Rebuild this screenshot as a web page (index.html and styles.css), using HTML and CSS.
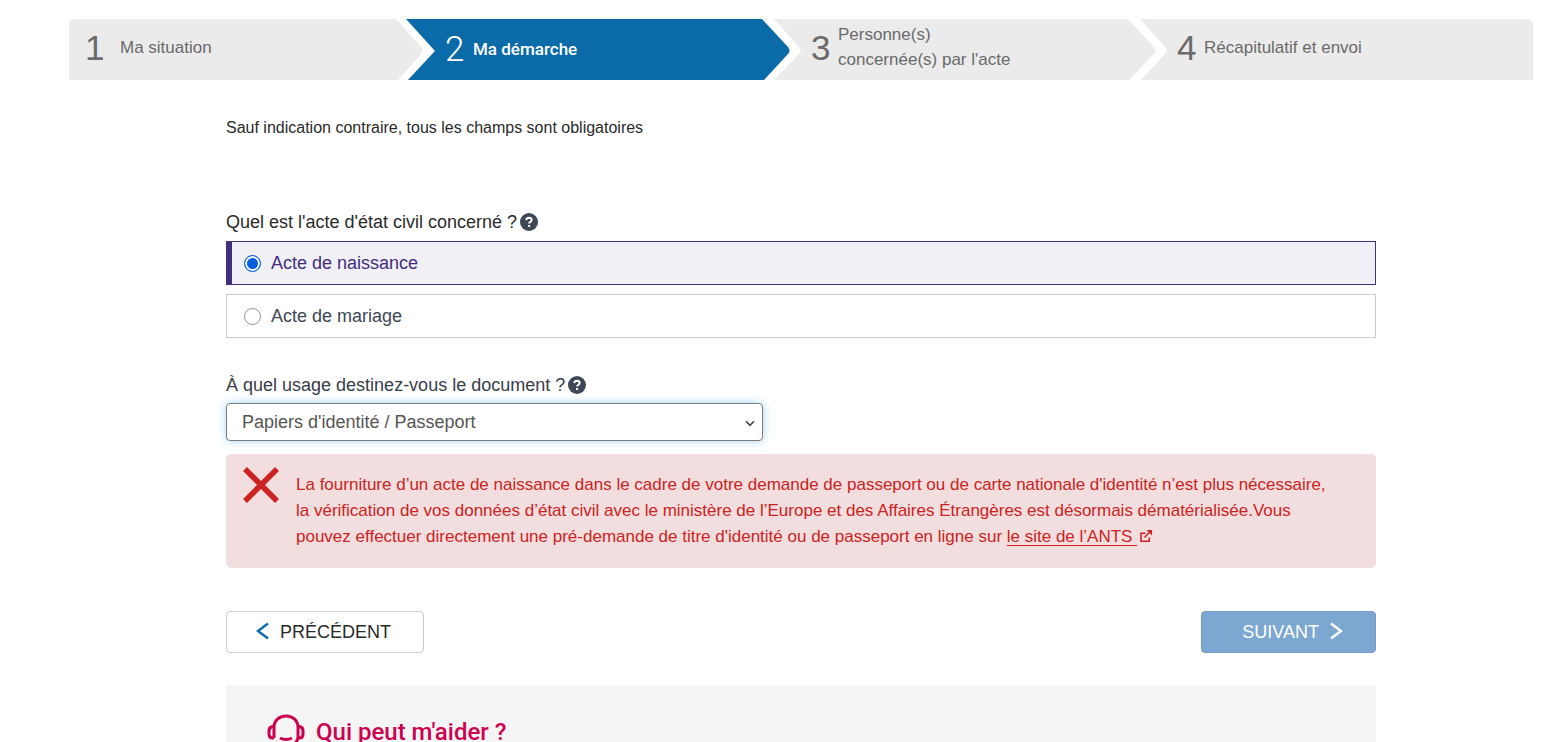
FILE: index.html
```
<!DOCTYPE html>
<html lang="fr">
<head>
<meta charset="utf-8">
<title>Demande d'acte d'état civil</title>
<link rel="stylesheet" href="styles.css">
</head>
<body>
<div class="page">
  <ol class="steps">
    <li class="step">
      <span class="step-num">1</span>
      <span class="step-label step-label-first">Ma situation</span>
      <svg class="step-arrow" viewBox="0 0 40 61" aria-hidden="true">
        <path class="fill-white" d="M0 0H12L40 32L12 61H0z"/>
        <path class="fill-blue" d="M11 0H40V61H13L40 32z"/>
        <path class="fill-grey" d="M0 0Q1 0 3 2L26 28Q29 31 26 35L3 61H0z"/>
      </svg>
    </li>
    <li class="step step-current" aria-current="step">
      <span class="step-num">2</span>
      <span class="step-label">Ma démarche</span>
      <svg class="step-arrow" viewBox="0 0 40 61" aria-hidden="true">
        <path class="fill-white" d="M0 0H40V61H0z"/>
        <path class="fill-grey" d="M13 0H40V61H13L38 35Q41 32 38 28z"/>
        <path class="fill-blue" d="M0 0H1L27 28Q30 32 27 35L3 61H0z"/>
      </svg>
    </li>
    <li class="step">
      <span class="step-num">3</span>
      <span class="step-label">Personne(s)<br>concernée(s) par l'acte</span>
      <svg class="step-arrow" viewBox="0 0 40 61" aria-hidden="true">
        <path class="fill-grey" d="M0 0H40V61H0z"/>
        <path class="fill-white" d="M1 0H13L38 28Q41 32 38 35L14 61H2L27 35Q30 32 27 28z"/>
      </svg>
    </li>
    <li class="step">
      <span class="step-num">4</span>
      <span class="step-label">Récapitulatif et envoi</span>
    </li>
  </ol>

  <main class="content">
    <p class="notice">Sauf indication contraire, tous les champs sont obligatoires</p>
    <form>
      <fieldset class="group">
        <legend class="question question-dark">Quel est l'acte d'état civil concerné ?
          <button class="help-btn" type="button" aria-label="Aide sur l'acte">
            <svg viewBox="0 0 18 18" width="18" height="18" aria-hidden="true"><circle cx="9" cy="9" r="9"/><path d="M6.3 7.1Q6.6 4.8 9 4.8Q11.6 4.9 11.6 7Q11.6 8.1 10.3 8.9Q9.1 9.6 9.1 10.6M9.1 12V14"/></svg>
          </button>
        </legend>
        <label class="choice choice-selected"><input type="radio" name="acte" checked>Acte de naissance</label>
        <label class="choice"><input type="radio" name="acte">Acte de mariage</label>
      </fieldset>

      <div class="question">
        <label for="usage">À quel usage destinez-vous le document ?</label>
        <button class="help-btn" type="button" aria-label="Aide sur l'usage">
          <svg viewBox="0 0 18 18" width="18" height="18" aria-hidden="true"><circle cx="9" cy="9" r="9"/><path d="M6.3 7.1Q6.6 4.8 9 4.8Q11.6 4.9 11.6 7Q11.6 8.1 10.3 8.9Q9.1 9.6 9.1 10.6M9.1 12V14"/></svg>
        </button>
      </div>
      <div class="select-wrap">
        <select id="usage" class="select"><option>Papiers d'identité / Passeport</option></select>
        <svg class="select-chevron" viewBox="0 0 10 7" aria-hidden="true"><path d="M1 1.2L5 5.4L9 1.2"/></svg>
      </div>

      <div class="alert" role="alert">
        <svg class="alert-cross" viewBox="0 0 36 36" aria-hidden="true"><path d="M2 2L34 34M34 2L2 34"/></svg>
        <p class="alert-text">La fourniture d’un acte de naissance dans le cadre de votre demande de passeport ou de carte nationale d'identité n’est plus nécessaire,<br>la vérification de vos données d’état civil avec le ministère de l’Europe et des Affaires Étrangères est désormais dématérialisée.Vous<br>pouvez effectuer directement une pré-demande de titre d'identité ou de passeport en ligne sur <a class="alert-link" href="#">le site de l’ANTS&nbsp;<svg class="external" viewBox="0 0 12 12" aria-hidden="true"><path class="external-line" d="M5.5 3.2H1V11.2H9.3V7.5M4.5 7.5L9.5 2.3"/><path class="external-head" d="M6.5 0H12V5.5z"/></svg></a></p>
      </div>

      <div class="actions">
        <button class="btn btn-prev" type="button"><svg class="chevron" viewBox="0 0 13 18" aria-hidden="true"><path d="M12 1.5L2 9L12 16.5"/></svg>PRÉCÉDENT</button>
        <button class="btn btn-next" type="submit" disabled>SUIVANT<svg class="chevron" viewBox="0 0 13 18" aria-hidden="true"><path d="M1 1.5L11 9L1 16.5"/></svg></button>
      </div>
    </form>

    <section class="help">
      <svg class="headset" viewBox="0 0 38 38" aria-hidden="true"><path d="M7 24V13.5C7 6.500 12 2 19 2S31 6.500 31 13.500V24M7 12.500H5.500Q2 13 2 17V20Q2 24 5.500 24H7M31 12.500H32.500Q36 13 36 17V20Q36 24 32.500 24H31M13 24Q19 27 25 24M31 24Q29 31 23 33"/></svg>
      <h2 class="help-title">Qui peut m'aider ?</h2>
    </section>
  </main>
</div>
</body>
</html>
```
FILE: styles.css
```
* { box-sizing: border-box; }
body {
  margin: 0;
  background: #fff;
  color: #2a2a2a;
  font: 18px/26px "Liberation Sans", Arial, sans-serif;
}
.page { padding: 19px 29px 0 69px; }

.steps {
  display: grid;
  grid-template-columns: repeat(4, 1fr);
  margin: 0;
  padding: 0;
  list-style: none;
  background: #ebebeb;
  border-radius: 6px 6px 0 0;
  overflow: hidden;
}
.step {
  display: flex;
  align-items: center;
  height: 61px;
  padding-left: 10px;
  color: #6a6a6a;
  font-size: 17px;
  line-height: 25px;
}
.step:first-child { padding-left: 16px; }
.step-num {
  width: 27px;
  font-size: 35px;
  line-height: 57px;
  padding-bottom: 4px;
}
.step-label { padding-bottom: 5px; }
.step-label-first { padding-left: 8px; }
.step-arrow { flex: none; width: 40px; height: 61px; margin-left: auto; }
.step-current {
  background: #0a6ba8;
  color: #fff;
  font-family: Roboto, sans-serif;
  font-weight: 500;
}
.step-current .step-num { width: 28px; font-weight: 300; padding-bottom: 0; }
.step-current .step-label { padding-bottom: 1px; }
.fill-grey { fill: #ebebeb; }
.fill-blue { fill: #0a6ba8; }
.fill-white { fill: #fff; }

.content { max-width: 1150px; margin: 0 auto; padding-top: 35px; }
.notice { margin: 0 0 68px; font-size: 16px; }
.group { margin: 0 0 34px; padding: 0; border: 0; min-width: 0; }
.question {
  display: flex;
  align-items: center;
  gap: 3px;
  padding: 0;
  color: #373d49;
}
.question-dark { color: #2a2a2a; margin-bottom: 6px; }
.help-btn {
  display: flex;
  padding: 0;
  border: 0;
  background: none;
}
.help-btn circle { fill: #3e4756; }
.help-btn path { fill: none; stroke: #fff; stroke-width: 2; }

.choice {
  display: flex;
  align-items: center;
  height: 44px;
  padding-left: 17px;
  border: 1px solid #ccc;
  color: #3e4756;
}
.choice + .choice { margin-top: 9px; }
.choice-selected {
  padding-left: 12px;
  border-color: #422e7c;
  border-left-width: 6px;
  background: #f1f0f7;
  color: #422e7c;
}
.choice input {
  appearance: none;
  width: 17px;
  height: 17px;
  margin: 0 10px 0 0;
  border: 1px solid #8f8f9d;
  border-radius: 50%;
  background: #fff;
}
.choice input:checked {
  border-color: #0060df;
  background: #0060df;
  box-shadow: inset 0 0 0 2px #fff;
}

.select-wrap { display: grid; align-items: center; width: 537px; max-width: 100%; margin-top: 5px; }
.select {
  grid-area: 1 / 1;
  appearance: none;
  width: 100%;
  height: 38px;
  padding: 0 30px 0 15px;
  border: 1px solid #7b7b7b;
  border-radius: 4px;
  background: #fff;
  box-shadow: 0 0 10px #a6d4f7;
  color: #555;
  font: inherit;
}
.select-chevron {
  grid-area: 1 / 1;
  justify-self: end;
  width: 10px;
  height: 7px;
  margin-right: 8px;
  margin-top: 2px;
  pointer-events: none;
}
.select-chevron path { fill: none; stroke: #444; stroke-width: 1.6; }

.alert {
  display: flex;
  gap: 17px;
  margin-top: 13px;
  padding: 13px 16px 18px 17px;
  border-radius: 5px;
  background: #f2dede;
  color: #c22;
}
.alert-cross { flex: none; width: 36px; height: 36px; }
.alert-cross path { stroke: #c22; stroke-width: 5.5; }
.alert-text { margin: 5px 0 0; font-size: 17px; }
.alert-link { color: inherit; text-underline-offset: 3px; }
.external { width: 12px; height: 12px; margin-left: 3px; }
.external-line { fill: none; stroke: #c22; stroke-width: 1.6; }
.external-head { fill: #c22; }

.actions { display: flex; justify-content: space-between; margin-top: 43px; }
.btn {
  display: flex;
  align-items: center;
  height: 42px;
  border-radius: 4px;
  font: inherit;
}
.btn-prev { gap: 11px; padding: 0 32px 0 29px; border: 1px solid #ccc; background: #fff; color: #2a2a2a; }
.btn-next { gap: 11px; padding: 0 32px 0 40px; border: 1px solid #719fc8; background: #7ba7d1; color: #fff; }
.chevron { width: 13px; height: 18px; margin-bottom: 3px; }
.chevron path { fill: none; stroke: #fff; stroke-width: 2.5; }
.btn-prev .chevron path { stroke: #0a6fae; }

.help {
  display: flex;
  align-items: flex-start;
  gap: 11px;
  margin-top: 32px;
  padding: 29px 41px 40px;
  background: #f5f5f5;
  color: #ce0050;
}
.headset { width: 38px; height: 38px; }
.headset path { fill: none; stroke: #ce0050; stroke-width: 3; }
.help-title { margin: 5px 0 0; font: 500 24px/26px Roboto, sans-serif; }
```
